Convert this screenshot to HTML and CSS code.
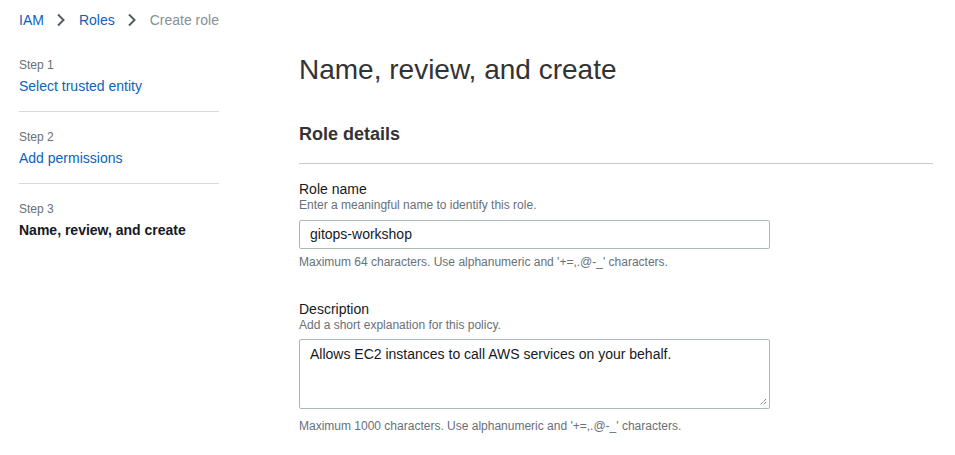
FILE: index.html
```html
<!DOCTYPE html>
<html>
<head>
<meta charset="utf-8">
<link rel="stylesheet" href="styles.css">
</head>
<body>
<nav class="crumbs">
  <a class="crumb-link">IAM</a>
  <svg class="chev" width="8" height="14" viewBox="0 0 8 14"><path d="M1 1.5 L6.5 7 L1 12.5" fill="none" stroke="#545b64" stroke-width="2"/></svg>
  <a class="crumb-link">Roles</a>
  <svg class="chev" width="8" height="14" viewBox="0 0 8 14"><path d="M1 1.5 L6.5 7 L1 12.5" fill="none" stroke="#545b64" stroke-width="2"/></svg>
  <span class="crumb-current">Create role</span>
</nav>
<div class="layout">
  <aside class="steps">
    <div class="step">
      <div class="step-num">Step 1</div>
      <a class="step-link">Select trusted entity</a>
    </div>
    <div class="step">
      <div class="step-num">Step 2</div>
      <a class="step-link">Add permissions</a>
    </div>
    <div class="step last">
      <div class="step-num">Step 3</div>
      <div class="step-current">Name, review, and create</div>
    </div>
  </aside>
  <main class="main">
    <h1 class="title">Name, review, and create</h1>
    <section class="panel">
      <h2 class="panel-title">Role details</h2>
      <div class="field">
        <div class="label">Role name</div>
        <div class="desc">Enter a meaningful name to identify this role.</div>
        <div class="input">gitops-workshop</div>
        <div class="hint">Maximum 64 characters. Use alphanumeric and '+=,.@-_' characters.</div>
      </div>
      <div class="field second">
        <div class="label">Description</div>
        <div class="desc">Add a short explanation for this policy.</div>
        <div class="textarea">Allows EC2 instances to call AWS services on your behalf.
          <svg class="grip" width="8" height="8" viewBox="0 0 8 8"><path d="M7 1 L1 7 M7 4 L4 7" stroke="#555" stroke-width="1" stroke-dasharray="1 1"/></svg>
        </div>
        <div class="hint ta-hint">Maximum 1000 characters. Use alphanumeric and '+=,.@-_' characters.</div>
      </div>
    </section>
  </main>
</div>
</body>
</html>
```
FILE: styles.css
```css
* { box-sizing: border-box; }
body {
  margin: 0;
  font-family: "Liberation Sans", Arial, Helvetica, sans-serif;
  color: #16191f;
  background: #fff;
}
.crumbs {
  display: flex;
  align-items: center;
  padding: 10px 19px 0;
  height: 30px;
  font-size: 14px;
  line-height: 20px;
}
.crumb-link { color: #0b63b8; }
.chev { margin: 0 14px 0 13px; }
.crumb-current { color: #879196; }

.layout {
  display: flex;
  padding: 0 22px 0 19px;
}
.steps {
  width: 200px;
  flex: none;
  margin-top: 27px;
}
.step {
  padding-bottom: 15px;
  border-bottom: 1px solid #d5dbdb;
  margin-bottom: 17px;
}
.step.last { border-bottom: none; }
.step-num {
  font-size: 12px;
  line-height: 16px;
  color: #687078;
  margin-bottom: 3px;
}
.step-link {
  display: block;
  font-size: 14px;
  line-height: 20px;
  color: #0b63b8;
}
.step-current {
  font-size: 14px;
  line-height: 20px;
  font-weight: bold;
  color: #16191f;
}
.main {
  flex: 1;
  margin-left: 80px;
}
.title {
  margin: 22px 0 0;
  font-size: 28px;
  line-height: 36px;
  font-weight: normal;
  color: #333;
}
.panel-title {
  margin: 34px 0 0;
  padding-bottom: 17px;
  border-bottom: 1px solid #c4c9cc;
  font-size: 18px;
  line-height: 24px;
  font-weight: bold;
  color: #333;
}
.field { margin-top: 16px; }
.field.second { margin-top: 30px; }
.label {
  font-size: 14px;
  line-height: 18px;
  color: #16191f;
}
.desc {
  font-size: 12px;
  line-height: 14px;
  color: #687078;
}
.input {
  margin-top: 8px;
  width: 471px;
  height: 29px;
  border: 1px solid #aab7b8;
  border-radius: 2px;
  padding: 0 10px;
  font-size: 14px;
  line-height: 27px;
  color: #16191f;
}
.textarea {
  position: relative;
  margin-top: 7px;
  width: 471px;
  height: 70px;
  border: 1px solid #aab7b8;
  border-radius: 2px;
  padding: 4px 10px;
  font-size: 14px;
  line-height: 20px;
  color: #16191f;
}
.grip {
  position: absolute;
  right: 2px;
  bottom: 2px;
}
.hint {
  margin-top: 5px;
  font-size: 12px;
  line-height: 16px;
  color: #687078;
}
.ta-hint { margin-top: 9px; }
```
